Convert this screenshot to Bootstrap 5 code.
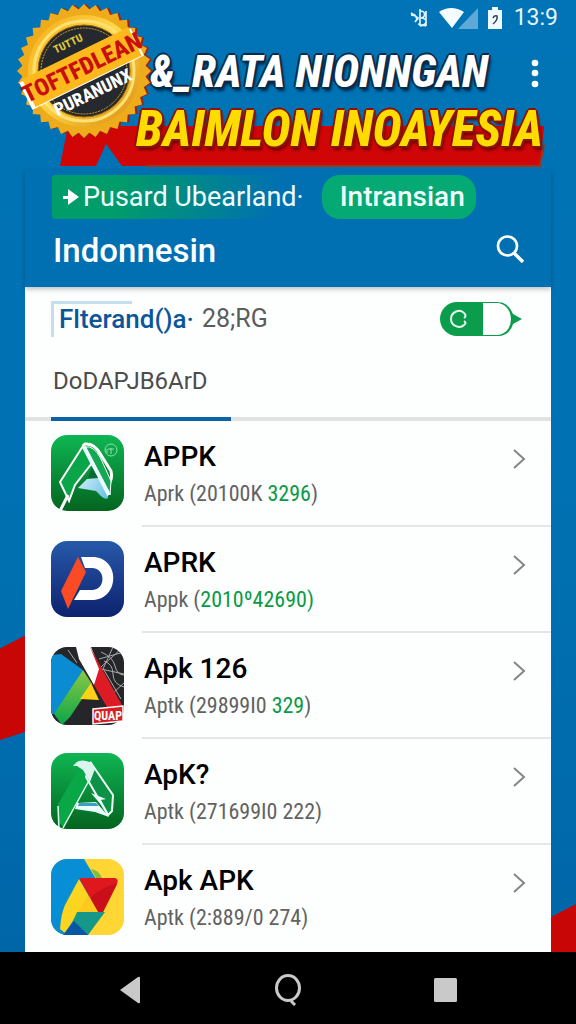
<!DOCTYPE html>
<html lang="id">
<head>
<meta charset="utf-8">
<meta name="viewport" content="width=device-width, initial-scale=1">
<title>Indonnesin</title>
<link href="https://cdn.jsdelivr.net/npm/bootstrap@5.3.0/dist/css/bootstrap.min.css" rel="stylesheet">
<style>
  body { font-family: Roboto, "Liberation Sans", sans-serif; background: #0071b3; color: #000; }
  svg { display: block; }
  .screen { position: relative; background: linear-gradient(#0074b6, #0070b1 60%, #0066a8); overflow: hidden; }
  .backdrop { position: absolute; background: #c90606; width: 64px; }
  .backdrop-start { left: 0; bottom: 212px; height: 104px; clip-path: polygon(0 12%, 100% -20%, 100% 80%, 0 100%); }
  .backdrop-end { right: 0; bottom: 0; height: 48px; clip-path: polygon(0 70%, 100% 0, 100% 100%, 0 100%); }
  .status-row { height: 36px; padding-right: 18px; color: #e4f6ff; font-size: 23px; line-height: 36px; }
  .hero { position: relative; height: 134px; padding-left: 136px; }
  .ribbon { position: absolute; left: 56px; right: 30px; bottom: 2px; }
  .ribbon svg { width: 100%; height: 44px; }
  .seal { position: absolute; left: 12px; top: 0; }
  .shout { position: relative; font-family: "Roboto Condensed", "Liberation Sans Narrow", Roboto, sans-serif; font-weight: 800; font-style: italic; margin: 0; white-space: nowrap; }
  .shout-white { font-size: 44px; line-height: 56px; padding: 8px 0 0 14px; color: #fff; text-shadow: 2px 0 #082a49, -2px 0 #082a49, 0 2px #082a49, 0 -2px #082a49, 1px 1px #082a49, -1px -1px #082a49, 2px 4px 3px #002848; }
  .shout-yellow { font-size: 49px; line-height: 60px; color: #ffdc00; text-shadow: 2px 0 #8c1208, -2px 0 #8c1208, 0 2px #8c1208, 0 -2px #8c1208, 2px 2px #8c1208, -1px -1px #8c1208, 2px 4px 3px #600; }
  .more-btn { position: absolute; right: 26px; top: 18px; }
  .icon-btn { background: none; border: 0; padding: 4px; color: #fff; }
  .sheet { position: relative; margin: 0 25px; }
  .sheet-head { background: #0070b2; color: #fff; height: 117px; box-shadow: 0 2px 5px #0004; position: relative; padding: 5px 23px 0 28px; }
  .chips { margin-left: -1px; gap: 6px; }
  .chip-link { font-size: 28px; line-height: 44px; color: #f0fffc; text-decoration: none; white-space: nowrap; }
  .chip-first { font-size: 27px; background: linear-gradient(100deg, #009c69 25%, #0070b200 85%); border-radius: 3px; padding-left: 10px; padding-right: 12px; }
  .chip-second { background: #04a974; border-radius: 18px; padding: 0 11px 0 18px; font-weight: 500; }
  .sheet-title { font-size: 33px; line-height: 40px; font-weight: 500; margin: 0; }
  .sheet-body { background: #fdfefe; }
  .filter-row { padding: 14px 28px 0 26px; }
  .filter-link { font-size: 26px; line-height: 36px; font-weight: 500; color: #0d559b; text-decoration: none; padding-left: 5px; border-left: 3px solid #c3dfee; background: linear-gradient(#c3dfee, #c3dfee) 0 0/78px 3px no-repeat; }
  .filter-num { font-size: 25px; line-height: 36px; color: #5c5c5c; font-weight: 400; }
  .pill { position: relative; width: 84px; height: 36px; }
  .pill input { position: absolute; inset: 0; width: 100%; height: 100%; opacity: 0; margin: 0; }
  .tabs-row { border-bottom: 4px solid #e2e2e2; padding-left: 26px; margin-top: 22px; }
  .tab-btn { background: none; border: 0; border-bottom: 4px solid #0a64a4; padding: 0 0 14px 2px; margin-bottom: -4px; width: 180px; text-align: left; font-size: 24px; line-height: 40px; color: #4c4c4c; font-weight: 400; height: 62px; white-space: nowrap; }
  .app-row { display: flex; height: 106px; padding-left: 26px; color: #000; text-decoration: none; }
  .app-row > svg { margin-top: 14px; flex: none; }
  .app-info { margin-left: 18px; padding: 16px 25px 0 2px; border-bottom: 2px solid #e6e6e6; }
  .app-row:last-child { height: 107px; }
  .app-row:last-child .app-info { border-bottom: 0; }
  .app-name { font-size: 28px; line-height: 40px; font-weight: 500; }
  .app-sub { font-family: "Roboto Condensed", Roboto, sans-serif; font-size: 22px; line-height: 34px; color: #626262; font-weight: 400; white-space: nowrap; }
  .hl { color: #0a9a45; }
  .chev { margin-top: 11px; }
  .sysnav { background: #000; height: 72px; padding: 4px 98px 0; }
</style>
</head>
<body>
<div class="d-flex flex-column min-vh-100">
  <div class="screen flex-grow-1">
    <div class="backdrop backdrop-start"></div>
    <div class="backdrop backdrop-end"></div>

    <div class="status-row d-flex justify-content-end align-items-center">
      <svg class="me-2" width="20" height="22" viewBox="0 0 20 22" fill="none" stroke="#dff4ff" stroke-width="1.700"><path d="M1 6l7 5-3 4M1 8l5 1M10 2v17M10 4c6 0 6 6 1 7 7 0 7 7-1 8M16 4v15M8 17l8 2M4 7l4 6"/></svg>
      <svg width="42" height="22" viewBox="0 0 42 22"><path d="M1 5Q13-3 26 5L14 21Z" fill="#f4fcff"/><path d="M20 22L40 1V22Z" fill="#5fa9d6"/></svg>
      <svg class="ms-2" width="14" height="22" viewBox="0 0 14 22"><path d="M4 0h6v3h4v19H0V3h4Z" fill="#f0fbff"/><path d="M5 11q1-3 4-2 1 4-4 8" fill="none" stroke="#24415a" stroke-width="1.500"/></svg>
      <span class="ms-2 ps-1">13:9</span>
    </div>

    <header class="hero">
      <div class="ribbon"><svg viewBox="0 0 490 44" preserveAspectRatio="none"><path d="M12 2H488L484 42H90L66 42 50 20 40 42H4Z" fill="#d00505"/><path d="M90 42H484L488 20" fill="none" stroke="#98381e" stroke-width="2"/></svg></div>
      <p class="shout shout-white">&amp;_RATA NIONNGAN</p>
      <p class="shout shout-yellow">BAIMLON INOAYESIA</p>
      <button class="icon-btn more-btn" type="button" aria-label="Menu"><svg width="22" height="30" viewBox="0 0 22 30" fill="#fff"><circle cx="11" cy="5" r="3.300"/><circle cx="11" cy="15" r="3.300"/><circle cx="11" cy="26" r="3.300"/></svg></button>
    </header>

    <main class="sheet">
      <div class="sheet-head">
        <div class="chips d-flex">
          <a class="chip-link chip-first d-flex align-items-center" href="#"><svg class="me-1" width="17" height="18" viewBox="0 0 17 18"><path d="M6 1l11 8-11 8V11H1V8h5Z" fill="#fff"/></svg>Pusard Ubearland·</a>
          <a class="chip-link chip-second" href="#">Intransian</a>
        </div>
        <div class="d-flex justify-content-between align-items-start pt-2 mt-1">
          <h1 class="sheet-title">Indonnesin</h1>
          <button class="icon-btn" type="button" aria-label="Cari"><svg width="28" height="28" viewBox="0 0 28 28" fill="none" stroke="#fff" stroke-width="2.600"><circle cx="11.500" cy="11" r="9.500"/><path d="M18 18l9 9" stroke-width="3.400"/></svg></button>
        </div>
      </div>

      <div class="sheet-body">
        <div class="filter-row d-flex align-items-center">
          <a class="filter-link" href="#">Flterand()a·</a>
          <span class="filter-num ms-2">28;RG</span>
          <label class="pill ms-auto"><input type="checkbox" checked aria-label="Filter"><svg width="84" height="36" viewBox="0 0 84 36"><path d="M18 1H58C68 1 72 8 74 13L83 18 74 23C72 30 67 35 58 35H18A17 17 0 0 1 18 1Z" fill="#0b9c4c"/><path d="M44 2H58C76 3 77 33 58 34H44Z" fill="#fff"/><path d="M25 12C21 7 12 11 12 18s9 10 13 6M25 12q3 3 0 5M25 24q3-2 0-4" fill="none" stroke="#e4fff0" stroke-width="2"/></svg></label>
        </div>
        <div class="tabs-row"><button class="tab-btn" type="button">DoDAPJB6ArD</button></div>

        <div>
          <a class="app-row" href="#">
            <svg width="73" height="76" viewBox="0 0 73 76"><defs><linearGradient id="gr" x2="0" y2="1"><stop stop-color="#0fb653"/><stop offset="1" stop-color="#04641f"/></linearGradient><linearGradient id="ice" x2="1" y2="1"><stop stop-color="#fff"/><stop offset="1" stop-color="#62bde4"/></linearGradient></defs><rect width="73" height="76" rx="16" fill="url(#gr)"/><path d="M32 11L34 9Q44 8 50 20L60 36Q62 44 57 50" fill="none" stroke="#fff" stroke-width="3"/><path d="M32 11L9 47 18 66 24 50 41 28Z" fill="#0ba549" stroke="#fff" stroke-width="2"/><path d="M17 60L9 76" stroke="#fff" stroke-width="3"/><path d="M42 20L58 48 57 63Q54 65 50 61L45 56 27 53 36 44 48 43Z" fill="url(#ice)"/><path d="M34 12Q43 10 50 24L60 46 59 60 38 21Z" fill="#14a855" stroke="#fff"/><path d="M33 12L58 60" stroke="#e8fbff" stroke-width="4"/><path d="M41 32L47 43H37Z" fill="#086b31"/><circle cx="60" cy="15" r="6" fill="none" stroke="#8be3a9"/><path d="M57 14h6M60 13v6M56 18v-4" stroke="#8be3a9"/></svg>
            <div class="app-info d-flex flex-grow-1 justify-content-between"><div><div class="app-name">APPK</div><div class="app-sub">Aprk (20100K <span class="hl">3296</span>)</div></div><svg class="chev" width="14" height="22" viewBox="0 0 14 22" fill="none" stroke="#858585" stroke-width="2"><path d="M2 2l10 9-10 9"/></svg></div>
          </a>
          <a class="app-row" href="#">
            <svg width="73" height="76" viewBox="0 0 73 76"><defs><linearGradient id="bl" x2="0" y2="1"><stop stop-color="#2759a9"/><stop offset="1" stop-color="#0d226f"/></linearGradient></defs><rect width="73" height="76" rx="16" fill="url(#bl)"/><path d="M30 16H41C70 16 69 59 41 59H23l6-10H41c14 0 14-22 0-22h-7Z" fill="#fff"/><path d="M27 16L35 31 17 68 10 50Z" fill="#fa4b24"/></svg>
            <div class="app-info d-flex flex-grow-1 justify-content-between"><div><div class="app-name">APRK</div><div class="app-sub">Appk (<span class="hl">2010º42690)</span></div></div><svg class="chev" width="14" height="22" viewBox="0 0 14 22" fill="none" stroke="#858585" stroke-width="2"><path d="M2 2l10 9-10 9"/></svg></div>
          </a>
          <a class="app-row" href="#">
            <svg width="73" height="78" viewBox="0 0 73 78"><defs><clipPath id="tile"><rect width="73" height="78" rx="16"/></clipPath><linearGradient id="lf" x2="0" y2="1"><stop stop-color="#8bc943"/><stop offset="1" stop-color="#09a64a"/></linearGradient></defs><g clip-path="url(#tile)"><path d="M0 0h73v78H0Z" fill="#24262a"/><g fill="none" stroke="#aaa"><path d="M48 12L73 5M52 22L62 0M50 20L70 2M50 22l23 5M62 46L73 36M53 23L70 52M50 5q12 5 14 14t9 9M53 14q9 3 9 13t11 13M17 3l9 13"/></g><path d="M0 8L10 7 32 23 5 67H0Z" fill="#0b8bd1"/><path d="M25 0H40L50 24 43 38 28 12Z" fill="#fff"/><path d="M39 0L72 60H56L43 38 48 22Z" fill="#dc1b25"/><path d="M32 23L41 37 19 70 11 78 3 67Z" fill="url(#lf)"/><path d="M40 36L48 53 29 52Z" fill="#ffd114"/></g><path d="M42 62l30-3v15l-30 3Z" fill="#d81d25" stroke="#fff" stroke-width="1.500"/><text x="57" y="73" text-anchor="middle" font-size="12" font-weight="700" fill="#fff" font-family="Roboto Condensed, sans-serif">QUAP</text></svg>
            <div class="app-info d-flex flex-grow-1 justify-content-between"><div><div class="app-name">Apk 126</div><div class="app-sub">Aptk (29899I0 <span class="hl">329</span>)</div></div><svg class="chev" width="14" height="22" viewBox="0 0 14 22" fill="none" stroke="#858585" stroke-width="2"><path d="M2 2l10 9-10 9"/></svg></div>
          </a>
          <a class="app-row" href="#">
            <svg width="73" height="76" viewBox="0 0 73 76"><rect width="73" height="76" rx="16" fill="url(#gr)"/><path d="M28 15L7 51 7 68 12 74 40 25Z" fill="#0aa747"/><path d="M8 76L7 53M12 75L40 24" stroke="#e0fff0" stroke-width="1.500"/><path d="M40 10L62 42 61 58 57 62 35 24Z" fill="#0c9246" stroke="#f0fff8" stroke-width="2"/><path d="M22 13q5-7 13-5 7 1 9 8l-5 13-7-12-6-4Z" fill="#d9f5ec"/><path d="M26 50l19-1 13 15-14-5-20-3ZM40 40l15 6-5 1 7 13Z" fill="#eafcff"/><path d="M28 50h17l3 3H27Z" fill="#3a9fc0"/></svg>
            <div class="app-info d-flex flex-grow-1 justify-content-between"><div><div class="app-name">ApK?</div><div class="app-sub">Aptk (271699I0 222)</div></div><svg class="chev" width="14" height="22" viewBox="0 0 14 22" fill="none" stroke="#858585" stroke-width="2"><path d="M2 2l10 9-10 9"/></svg></div>
          </a>
          <a class="app-row" href="#">
            <svg width="73" height="76" viewBox="0 0 73 76"><defs><clipPath id="tile5"><rect width="73" height="76" rx="16"/></clipPath></defs><g clip-path="url(#tile5)"><path d="M0 0h73v76H0Z" fill="#ffd633"/><path d="M0 0H33L45 20 37 76H0Z" fill="#078ed5"/><path d="M40 10q8 1 11 9H45Z" fill="#83bd3e"/><path d="M28 20L38 37 14 74 9 70q1-15 5-24Z" fill="#fbd51f"/><path d="M28 19H64q4 1 2 6L52 53H47Z" fill="#df1820"/><path d="M39 40q9-12 27-15L52 53H47Z" fill="#c80f1a"/><path d="M38 37L47 53H26Z" fill="#ffc91e"/><path d="M26 53H54L37 76 22 62Z" fill="#15988a"/><path d="M23 62L37 76H12Z" fill="#0a55a5"/></g></svg>
            <div class="app-info d-flex flex-grow-1 justify-content-between"><div><div class="app-name">Apk APK</div><div class="app-sub">Aptk (2:889/0 274)</div></div><svg class="chev" width="14" height="22" viewBox="0 0 14 22" fill="none" stroke="#858585" stroke-width="2"><path d="M2 2l10 9-10 9"/></svg></div>
          </a>
        </div>
      </div>
    </main>

    <svg class="seal" width="142" height="142" viewBox="0 0 142 142">
      <defs>
        <linearGradient id="gold" x2="1" y2="1"><stop stop-color="#f3a916"/><stop offset=".45" stop-color="#ffd84a"/><stop offset="1" stop-color="#d88c10"/></linearGradient>
        <path id="sq" d="M72 4L139 71 72 138 5 71Z"/>
        <g id="burst"><use href="#sq"/><use href="#sq" transform="rotate(10 72 71)"/><use href="#sq" transform="rotate(20 72 71)"/><use href="#sq" transform="rotate(30 72 71)"/><use href="#sq" transform="rotate(40 72 71)"/><use href="#sq" transform="rotate(50 72 71)"/><use href="#sq" transform="rotate(60 72 71)"/><use href="#sq" transform="rotate(70 72 71)"/><use href="#sq" transform="rotate(80 72 71)"/></g>
      </defs>
      <use href="#burst" fill="#a3200f" x="2"/>
      <use href="#burst" fill="#eeac1c"/>
      <circle cx="72" cy="71" r="56" fill="url(#gold)"/>
      <circle cx="72" cy="71" r="50" fill="none" stroke="#ffe172" stroke-width="3"/>
      <circle cx="72" cy="71" r="46" fill="#25282c" stroke="#9a650e"/>
      <circle cx="72" cy="71" r="43" fill="none" stroke="#d5a52a" stroke-dasharray="2 1"/>
      <g transform="rotate(-26 70 70)" font-family="Roboto Condensed, sans-serif" font-weight="800" text-anchor="middle">
        <path d="M8 54H132V84H8Z" fill="#fff"/><path d="M12 52H130V83H12Z" fill="#ffb91c"/>
        <text x="69" y="44" font-size="11" fill="#ddc73c">TUTTU</text>
        <text x="71" y="76" font-size="24" fill="#c90e0e">TOFTFDLEAN</text>
        <text x="70" y="101" font-size="18" fill="#fff">PURANUNX</text>
      </g>
    </svg>
  </div>

  <nav class="sysnav d-flex justify-content-between align-items-center" aria-label="Sistem">
    <button class="icon-btn ms-3" type="button" aria-label="Kembali"><svg width="28" height="30" viewBox="0 0 28 30"><path d="M2 15L20 2q2-1 2 1v24q0 2-2 1Z" fill="#c9c9c9"/></svg></button>
    <button class="icon-btn" type="button" aria-label="Beranda"><svg width="30" height="34" viewBox="0 0 30 34" fill="none" stroke="#c9c9c9" stroke-width="3"><ellipse cx="13" cy="15" rx="11.500" ry="12.500"/><path d="M16 28l4 4"/></svg></button>
    <button class="icon-btn me-3" type="button" aria-label="Terkini"><svg width="24" height="26" viewBox="0 0 24 26"><rect y="1" width="23" height="24" rx="1.500" fill="#c9c9c9"/></svg></button>
  </nav>
</div>
<script src="https://cdn.jsdelivr.net/npm/bootstrap@5.3.0/dist/js/bootstrap.bundle.min.js"></script>
</body>
</html>
